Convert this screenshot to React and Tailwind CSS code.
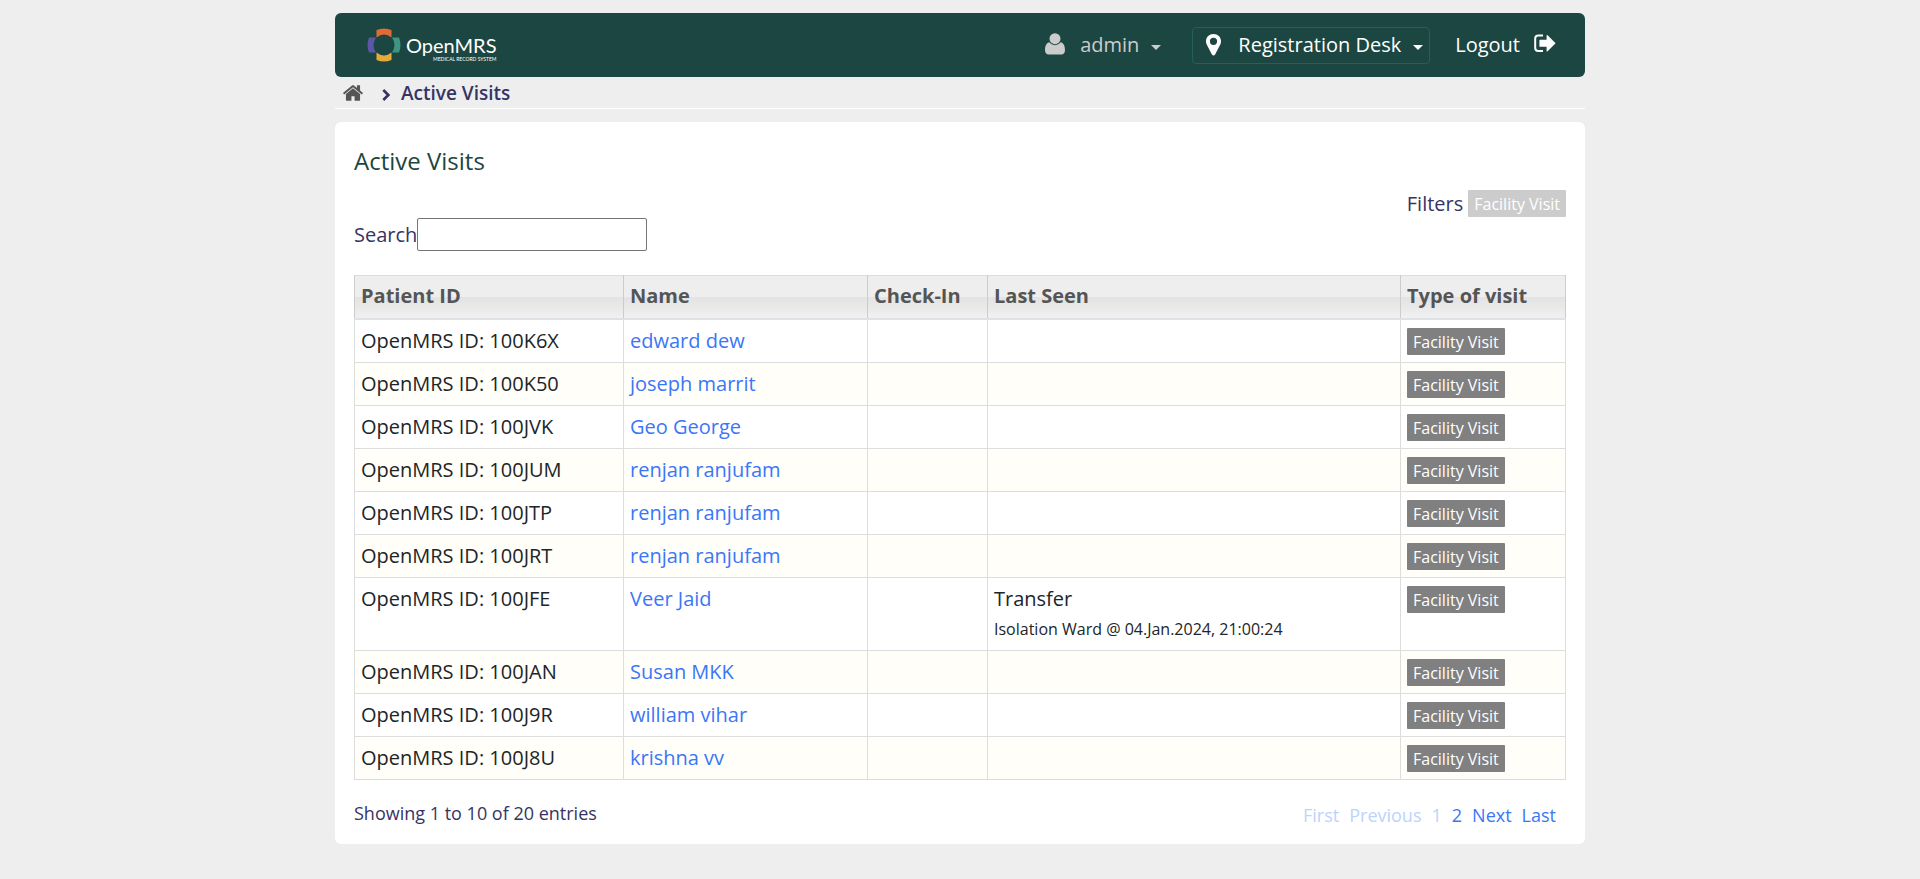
import React from "react";

const visits = [
  { id: "100K6X", name: "edward dew" },
  { id: "100K50", name: "joseph marrit" },
  { id: "100JVK", name: "Geo George" },
  { id: "100JUM", name: "renjan ranjufam" },
  { id: "100JTP", name: "renjan ranjufam" },
  { id: "100JRT", name: "renjan ranjufam" },
  {
    id: "100JFE",
    name: "Veer Jaid",
    lastSeen: { event: "Transfer", detail: "Isolation Ward @ 04.Jan.2024, 21:00:24" },
  },
  { id: "100JAN", name: "Susan MKK" },
  { id: "100J9R", name: "william vihar" },
  { id: "100J8U", name: "krishna vv" },
];

function Logo() {
  return (
    <a href="#home" aria-label="OpenMRS home" className="flex items-center gap-[5px] text-white">
      <svg width="34" height="34" viewBox="0 0 34 34" aria-hidden="true">
        <path d="M9.500 9.500V2Q17-1 24.500 2V9.500Q17 3.500 9.500 9.500Z" fill="#e26b35" />
        <path d="M9.500 24.500V32Q17 35 24.500 32V24.500Q17 30.500 9.500 24.500Z" fill="#e6a93c" />
        <path d="M9 9.500H2Q-1 17 2 24.500H9Q4 17 9 9.500Z" fill="#5b57a6" />
        <path d="M25 9.500H32Q35 17 32 24.500H25Q30 17 25 9.500Z" fill="#3f9482" />
      </svg>
      <span className="flex flex-col items-end pt-1.5">
        <span className="font-[Lato,sans-serif] text-xl leading-[22px] font-normal">OpenMRS</span>
        <span className="font-[Lato,sans-serif] text-[5px] leading-[6px] font-normal">MEDICAL RECORD SYSTEM</span>
      </span>
    </a>
  );
}

function UserIcon() {
  return (
    <svg width="20" height="22" viewBox="0 0 20 22" fill="currentColor" className="mb-0.5" aria-hidden="true">
      <circle cx="10" cy="5.700" r="5.500" />
      <path d="M4.600 9.200C1.600 9.600 0 12.500 0 17.200C0 19.800 1.400 21.500 3.700 21.500H16.300C18.600 21.500 20 19.800 20 17.200C20 12.500 18.400 9.600 15.400 9.200C12.300 12.500 7.700 12.500 4.600 9.200Z" />
      <path d="M4.400 8.900C7.600 12.700 12.400 12.700 15.600 8.900" fill="none" stroke="#1c4641" strokeWidth=".7" />
    </svg>
  );
}

function PinIcon() {
  return (
    <svg width="15" height="22" viewBox="0 0 15 22" fill="currentColor" aria-hidden="true">
      <path
        fillRule="evenodd"
        d="M7.500 0C11.700 0 15 3.100 15 7.200C15 8.500 14.800 9.400 14.300 10.400L9.100 20.500C8.400 21.800 6.600 21.800 5.900 20.500L.7 10.400C.2 9.400 0 8.500 0 7.200C0 3.100 3.300 0 7.500 0ZM7.500 3.700A3.600 3.600 0 1 0 7.500 10.900A3.600 3.600 0 1 0 7.500 3.700Z"
      />
    </svg>
  );
}

function LogoutIcon() {
  return (
    <svg width="22" height="19" viewBox="0 0 22 19" className="mb-1" aria-hidden="true">
      <path d="M9 1.500H4.300Q1.200 1.500 1.200 4.500V14Q1.200 17 4.300 17H9" fill="none" stroke="currentColor" strokeWidth="2" />
      <path d="M6 5.800H12.600V1.600Q12.600.4 13.600 1.200L21.600 9.200L13.600 17.300Q12.600 18 12.600 16.900V12.800H6Q5.400 12.800 5.400 12.200V6.400Q5.400 5.800 6 5.800Z" fill="currentColor" />
    </svg>
  );
}

function HomeIcon() {
  return (
    <svg width="22" height="22" viewBox="0 0 1792 1792" fill="currentColor" aria-hidden="true">
      <path d="M1472 992v480q0 26-19 45t-45 19h-384v-384h-256v384h-384q-26 0-45-19t-19-45v-480q0-1 .5-3t.5-3l575-474 575 474q1 2 1 6zm223-69l-62 74q-8 9-21 11h-3q-13 0-21-7l-692-577-692 577q-12 8-24 7-13-2-21-11l-62-74q-8-10-7-23.500t11-21.500l719-599q32-26 76-26t76 26l244 204v-195q0-14 9-23t23-9h192q14 0 23 9t9 23v408l219 182q10 8 11 21.500t-7 23.500z" />
    </svg>
  );
}

function Caret() {
  return (
    <svg width="10" height="5" viewBox="0 0 10 5" fill="currentColor" className="mt-1" aria-hidden="true">
      <path d="M0 0H10L5 5Z" />
    </svg>
  );
}

function Header() {
  return (
    <header className="flex h-16 items-center justify-between rounded-md bg-[#1c4641] pr-[29px] pl-8 text-xl text-white">
      <Logo />
      <div className="flex items-center">
        <button type="button" className="flex items-center text-[#ccc]">
          <UserIcon />
          <span className="mr-3 ml-[15px]">admin</span>
          <Caret />
        </button>
        <button type="button" className="ml-[31px] flex h-[37px] items-center rounded-sm border border-[#275e57] pr-1.5 pl-[13px]">
          <PinIcon />
          <span className="mr-3 ml-[17px]">Registration Desk</span>
          <Caret />
        </button>
        <a href="#logout" className="ml-[25px] flex items-center gap-3.5">
          Logout
          <LogoutIcon />
        </a>
      </div>
    </header>
  );
}

function Breadcrumbs() {
  return (
    <nav aria-label="Breadcrumb" className="flex h-8 items-center border-b border-white pt-0.5 pl-[7px] text-[19px] font-semibold text-[#363463]">
      <a href="#home" aria-label="Home" className="pb-0.5 text-[#555]">
        <HomeIcon />
      </a>
      <svg width="8" height="12" viewBox="0 0 8 12" className="mt-0.5 mr-[11px] ml-[18px]" aria-hidden="true">
        <path d="M1.300 1L6.300 6L1.300 11" fill="none" stroke="currentColor" strokeWidth="2.600" />
      </svg>
      <span>Active Visits</span>
    </nav>
  );
}

const headCell = "border-x border-t border-b-2 border-x-[#ccc] border-t-[#ddd] border-b-[#dee2e6] px-1.5 pb-0.5 text-left font-bold";
const cell = "h-[43px] border border-[#ddd] px-1.5 py-1.5 align-top";
const tag = "inline-block h-[27px] rounded-[1px] px-1.5 text-base leading-7 font-normal text-white";

function VisitsTable() {
  return (
    <table className="w-full table-fixed border-collapse text-xl leading-[30px] font-normal text-[#212529]">
      <thead>
        <tr className="h-[43px] bg-linear-to-b from-[#eee] from-50% via-[#e3e3e3] via-50% to-[#f1f1f1] text-[#555]">
          <th className={`${headCell} w-[269px]`}>Patient ID</th>
          <th className={`${headCell} w-[244px]`}>Name</th>
          <th className={`${headCell} w-[120px]`}>Check-In</th>
          <th className={headCell}>Last Seen</th>
          <th className={`${headCell} w-[165px]`}>Type of visit</th>
        </tr>
      </thead>
      <tbody>
        {visits.map((visit) => (
          <tr key={visit.id} className="even:bg-[#fffef8]">
            <td className={cell}>OpenMRS ID: {visit.id}</td>
            <td className={cell}>
              <a href={`#${visit.id}`} className="text-[#3a76f8]">{visit.name}</a>
            </td>
            <td className={cell} />
            <td className={cell}>
              {visit.lastSeen && (
                <>
                  <div>{visit.lastSeen.event}</div>
                  <div className="text-base leading-[30px] font-normal">{visit.lastSeen.detail}</div>
                </>
              )}
            </td>
            <td className={cell}>
              <div className="flex pt-0.5">
                <span className={`${tag} bg-[#808080]`}>Facility Visit</span>
              </div>
            </td>
          </tr>
        ))}
      </tbody>
    </table>
  );
}

function Pagination() {
  return (
    <div className="mt-[19px] flex items-start justify-between font-normal">
      <p className="text-lg leading-7">Showing 1 to 10 of 20 entries</p>
      <nav aria-label="Pages" className="mt-0.5 mr-2.5 flex gap-2.5 text-lg leading-7 text-[#3a76f8]">
        <button type="button" disabled className="text-[#bcd3fd]">First</button>
        <button type="button" disabled className="text-[#bcd3fd]">Previous</button>
        <button type="button" disabled className="text-[#bcd3fd]">1</button>
        <button type="button">2</button>
        <button type="button">Next</button>
        <button type="button">Last</button>
      </nav>
    </div>
  );
}

export default function App() {
  return (
    <div className="min-h-screen bg-[#eee] pt-[13px] pb-9 font-['Open_Sans',sans-serif] text-[#363463]">
      <div className="mx-auto max-w-[1250px]">
        <Header />
        <Breadcrumbs />
        <main className="mt-[13px] rounded-md bg-white px-[19px] pt-[23px] pb-[15px]">
          <h2 className="text-2xl leading-8 font-normal text-[#1c4641]">Active Visits</h2>
          <div className="mt-[13px] flex items-center justify-end gap-[5px]">
            <span className="text-xl leading-[27px] font-normal">Filters</span>
            <button type="button" className={`${tag} bg-[#ccc]`}>Facility Visit</button>
          </div>
          <div className="mt-px mb-6 flex items-center text-xl font-normal">
            <label htmlFor="search">Search</label>
            <input id="search" type="text" className="h-[33px] w-[230px] rounded-xs border border-[#767676] bg-white px-1" />
          </div>
          <VisitsTable />
          <Pagination />
        </main>
      </div>
    </div>
  );
}
